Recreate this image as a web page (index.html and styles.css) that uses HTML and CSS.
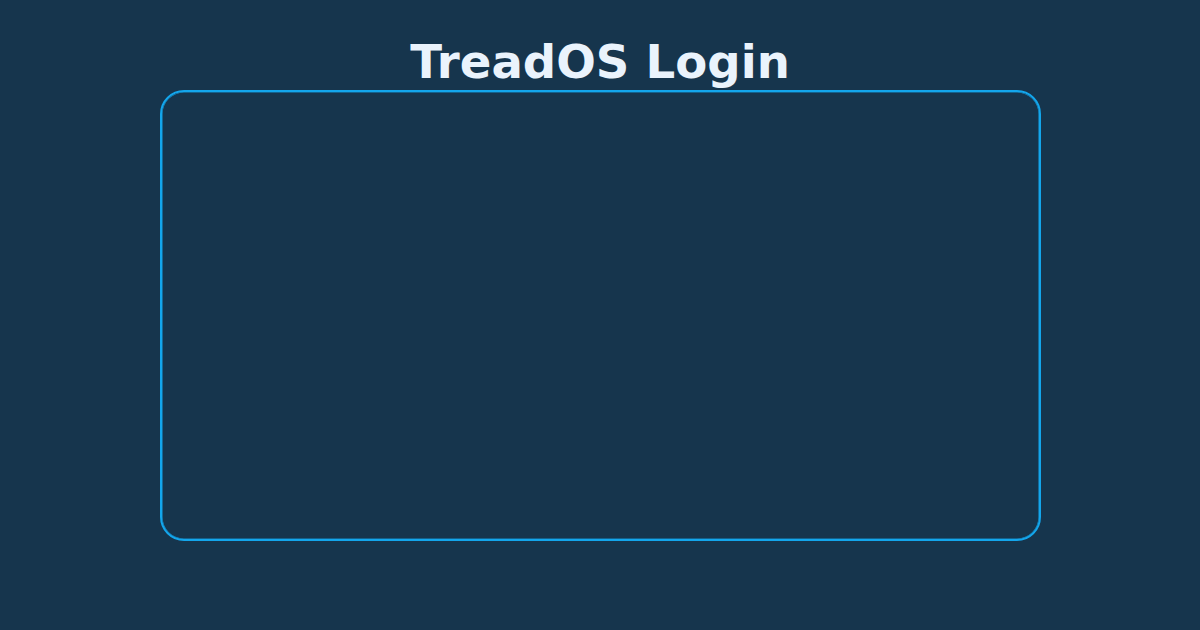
FILE: index.html
```html
<!DOCTYPE html>
<html lang="en">
<head>
<meta charset="utf-8">
<title>TreadOS Login</title>
<link rel="stylesheet" href="styles.css">
</head>
<body>
<main class="page">
  <h1 class="title">TreadOS Login</h1>
  <section class="panel"></section>
</main>
</body>
</html>
```
FILE: styles.css
```css
html, body {
  margin: 0;
  padding: 0;
  background: #16354d;
}
body {
  width: 1200px;
  height: 630px;
  overflow: hidden;
  font-family: "DejaVu Sans", sans-serif;
}
.page {
  display: flex;
  flex-direction: column;
  align-items: center;
  padding-top: 35px;
}
.title {
  margin: 0;
  font-size: 46.6px;
  font-weight: bold;
  line-height: 55px;
  color: #eaf3fc;
}
.panel {
  box-sizing: border-box;
  width: 881px;
  height: 451px;
  border: 2px solid #13a6ec;
  border-radius: 24px;
  box-shadow: inset 0 0 0 0.6px rgba(19, 166, 236, 0.8);
}
```
